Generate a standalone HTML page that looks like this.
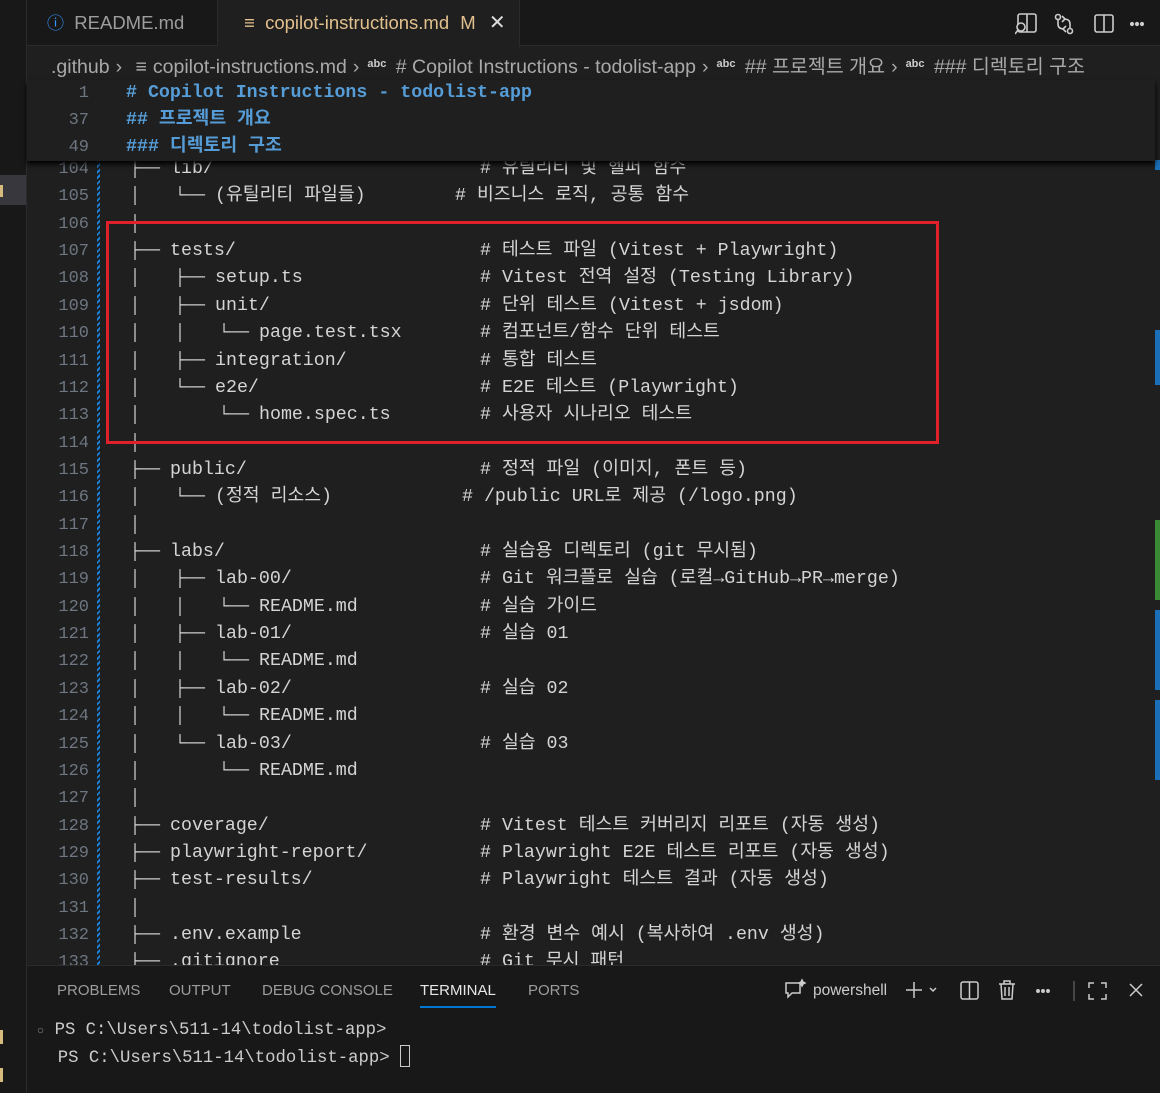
<!DOCTYPE html>
<html><head><meta charset="utf-8"><style>
*{margin:0;padding:0;box-sizing:border-box}
body{width:1160px;height:1093px;background:#1f1f1f;position:relative;overflow:hidden;font-family:"Liberation Sans","Noto Sans CJK KR",sans-serif;color:#ccc}
.abs{position:absolute}
.mono{font-family:"Liberation Mono","Noto Sans CJK KR",monospace;font-size:18.3px;white-space:pre}
#side{left:0;top:0;width:27px;height:1093px;background:#181818;border-right:1px solid #2b2b2b}
#tabs{left:27px;top:0;width:1133px;height:46px;background:#181818;border-bottom:1px solid #2b2b2b}
.tab{position:absolute;top:0;height:46px;font-size:18.5px;line-height:46px;padding-left:20px;white-space:nowrap}
#bc{left:27px;top:46px;width:1133px;height:36px;font-size:19.5px;line-height:36px;color:#a9a9a9;white-space:nowrap}
.abc{font-size:11px;font-weight:bold;vertical-align:6px;color:#ccc;margin-right:4px}
.sep{margin:0 8px 0 6px}
#editor{left:27px;top:160px;width:1133px;height:805px;overflow:hidden}
.row{position:absolute;left:0;height:27.36px;line-height:27.36px;width:1100px;color:#d4d4d4}
.row span{position:absolute}
.num{left:0;width:62px;text-align:right;color:#6e7681;font-size:17px}
.g{font-size:16.7px}
#sticky{left:27px;top:80px;width:1128px;height:81px;background:#1f1f1f;box-shadow:0 3px 5px #000;z-index:3}
.h{color:#569cd6;font-weight:bold;left:99px}
#panel{left:27px;top:965px;width:1133px;height:128px;background:#181818;border-top:1px solid #2b2b2b}
.pt{position:absolute;top:16px;font-size:15px;color:#9d9d9d}
</style></head><body>
<div id="side" class="abs">
 <div class="abs" style="left:0;top:175px;width:26px;height:30px;background:#37373d"></div>
 <div class="abs" style="left:0;top:185px;width:3px;height:12px;background:#d7ba7d"></div>
 <div class="abs" style="left:0;top:1030px;width:3px;height:14px;background:#d7ba7d"></div>
 <div class="abs" style="left:0;top:1068px;width:3px;height:14px;background:#d7ba7d"></div>
</div>
<div id="tabs" class="abs">
 <div class="tab" style="left:0;width:191px;color:#9d9d9d;border-right:1px solid #2b2b2b"><span style="color:#3794ff;font-size:17px">ⓘ</span>&nbsp; README.md</div>
 <div class="tab" style="left:191px;width:302px;background:#1f1f1f;color:#e2c08d;border-right:1px solid #2b2b2b;height:47px;padding-left:26px">≡&nbsp; copilot-instructions.md <span style="margin-left:6px">M</span> <span style="color:#ddd;margin-left:8px;font-size:20px">✕</span></div>
 <svg class="abs" style="left:988px;top:12px" width="130" height="24" fill="none" stroke="#ccc" stroke-width="1.6">
  <rect x="3" y="2" width="18" height="18" rx="2"/><line x1="12" y1="2" x2="12" y2="20"/><circle cx="6" cy="15" r="4" fill="#181818"/><line x1="3" y1="18" x2="0" y2="22"/>
  <circle cx="43" cy="5" r="2.5"/><circle cx="55" cy="19" r="2.5"/><path d="M43 8v4q0 5 6 5M55 16v-4q0-5-6-5M47 4l3 3-3 3M51 14l-3 3 3 3"/>
  <rect x="80" y="3" width="18" height="17" rx="2"/><line x1="89" y1="3" x2="89" y2="20"/>
  <circle cx="117" cy="12" r="1.3" fill="#ccc"/><circle cx="122" cy="12" r="1.3" fill="#ccc"/><circle cx="127" cy="12" r="1.3" fill="#ccc"/>
 </svg>
</div>
<div id="bc" class="abs"><span style="margin-left:24px">.github</span><span class="sep">›</span> <span style="margin-right:6px">≡</span>copilot-instructions.md<span class="sep">›</span><span class="abc">abc</span> # Copilot Instructions - todolist-app<span class="sep">›</span><span class="abc">abc</span> ## 프로젝트 개요<span class="sep">›</span><span class="abc">abc</span> ### 디렉토리 구조</div>
<div id="sticky" class="abs mono">
 <div class="row" style="top:0"><span class="num">1</span><span class="h"># Copilot Instructions - todolist-app</span></div>
 <div class="row" style="top:27px"><span class="num">37</span><span class="h">## 프로젝트 개요</span></div>
 <div class="row" style="top:54px"><span class="num">49</span><span class="h">### 디렉토리 구조</span></div>
</div>
<div id="editor" class="abs mono">
 <div class="abs" style="left:70px;top:0;width:3px;height:805px;background:repeating-linear-gradient(135deg,#1b81d8 0 2px,#1f1f1f 2px 4px)"></div>
 <div class="abs" style="right:0;top:0;width:5px;height:10px;background:#1b6fb8"></div>
 <div class="abs" style="right:0;top:170px;width:5px;height:55px;background:#1b6fb8"></div>
 <div class="abs" style="right:0;top:360px;width:5px;height:80px;background:#388a34"></div>
 <div class="abs" style="right:0;top:450px;width:5px;height:80px;background:#1b6fb8"></div>
 <div class="abs" style="right:0;top:540px;width:5px;height:80px;background:#1b6fb8"></div>
 <div id="lines" style="position:absolute;left:0;top:-4px;width:1100px;height:900px">
  <div class="row" style="top:0"><span class="num">104</span><span class="g" style="left:103px">├──</span><span style="left:143px">lib/</span><span style="left:453px"># 유틸리티 및 헬퍼 함수</span></div>
  <div class="row" style="top:27.36px"><span class="num">105</span><span class="g" style="left:103px">│</span><span class="g" style="left:148px">└──</span><span style="left:188px">(유틸리티 파일들)</span><span style="left:428px"># 비즈니스 로직, 공통 함수</span></div>
  <div class="row" style="top:54.72px"><span class="num">106</span><span class="g" style="left:103px">│</span></div>
  <div class="row" style="top:82.08px"><span class="num">107</span><span class="g" style="left:103px">├──</span><span style="left:143px">tests/</span><span style="left:453px"># 테스트 파일 (Vitest + Playwright)</span></div>
  <div class="row" style="top:109.44px"><span class="num">108</span><span class="g" style="left:103px">│</span><span class="g" style="left:148px">├──</span><span style="left:188px">setup.ts</span><span style="left:453px"># Vitest 전역 설정 (Testing Library)</span></div>
  <div class="row" style="top:136.8px"><span class="num">109</span><span class="g" style="left:103px">│</span><span class="g" style="left:148px">├──</span><span style="left:188px">unit/</span><span style="left:453px"># 단위 테스트 (Vitest + jsdom)</span></div>
  <div class="row" style="top:164.16px"><span class="num">110</span><span class="g" style="left:103px">│</span><span class="g" style="left:148px">│</span><span class="g" style="left:192px">└──</span><span style="left:232px">page.test.tsx</span><span style="left:453px"># 컴포넌트/함수 단위 테스트</span></div>
  <div class="row" style="top:191.52px"><span class="num">111</span><span class="g" style="left:103px">│</span><span class="g" style="left:148px">├──</span><span style="left:188px">integration/</span><span style="left:453px"># 통합 테스트</span></div>
  <div class="row" style="top:218.88px"><span class="num">112</span><span class="g" style="left:103px">│</span><span class="g" style="left:148px">└──</span><span style="left:188px">e2e/</span><span style="left:453px"># E2E 테스트 (Playwright)</span></div>
  <div class="row" style="top:246.24px"><span class="num">113</span><span class="g" style="left:103px">│</span><span class="g" style="left:192px">└──</span><span style="left:232px">home.spec.ts</span><span style="left:453px"># 사용자 시나리오 테스트</span></div>
  <div class="row" style="top:273.6px"><span class="num">114</span><span class="g" style="left:103px">│</span></div>
  <div class="row" style="top:300.96px"><span class="num">115</span><span class="g" style="left:103px">├──</span><span style="left:143px">public/</span><span style="left:453px"># 정적 파일 (이미지, 폰트 등)</span></div>
  <div class="row" style="top:328.32px"><span class="num">116</span><span class="g" style="left:103px">│</span><span class="g" style="left:148px">└──</span><span style="left:188px">(정적 리소스)</span><span style="left:435px"># /public URL로 제공 (/logo.png)</span></div>
  <div class="row" style="top:355.68px"><span class="num">117</span><span class="g" style="left:103px">│</span></div>
  <div class="row" style="top:383.04px"><span class="num">118</span><span class="g" style="left:103px">├──</span><span style="left:143px">labs/</span><span style="left:453px"># 실습용 디렉토리 (git 무시됨)</span></div>
  <div class="row" style="top:410.4px"><span class="num">119</span><span class="g" style="left:103px">│</span><span class="g" style="left:148px">├──</span><span style="left:188px">lab-00/</span><span style="left:453px"># Git 워크플로 실습 (로컬→GitHub→PR→merge)</span></div>
  <div class="row" style="top:437.76px"><span class="num">120</span><span class="g" style="left:103px">│</span><span class="g" style="left:148px">│</span><span class="g" style="left:192px">└──</span><span style="left:232px">README.md</span><span style="left:453px"># 실습 가이드</span></div>
  <div class="row" style="top:465.12px"><span class="num">121</span><span class="g" style="left:103px">│</span><span class="g" style="left:148px">├──</span><span style="left:188px">lab-01/</span><span style="left:453px"># 실습 01</span></div>
  <div class="row" style="top:492.48px"><span class="num">122</span><span class="g" style="left:103px">│</span><span class="g" style="left:148px">│</span><span class="g" style="left:192px">└──</span><span style="left:232px">README.md</span></div>
  <div class="row" style="top:519.84px"><span class="num">123</span><span class="g" style="left:103px">│</span><span class="g" style="left:148px">├──</span><span style="left:188px">lab-02/</span><span style="left:453px"># 실습 02</span></div>
  <div class="row" style="top:547.2px"><span class="num">124</span><span class="g" style="left:103px">│</span><span class="g" style="left:148px">│</span><span class="g" style="left:192px">└──</span><span style="left:232px">README.md</span></div>
  <div class="row" style="top:574.56px"><span class="num">125</span><span class="g" style="left:103px">│</span><span class="g" style="left:148px">└──</span><span style="left:188px">lab-03/</span><span style="left:453px"># 실습 03</span></div>
  <div class="row" style="top:601.92px"><span class="num">126</span><span class="g" style="left:103px">│</span><span class="g" style="left:192px">└──</span><span style="left:232px">README.md</span></div>
  <div class="row" style="top:629.28px"><span class="num">127</span><span class="g" style="left:103px">│</span></div>
  <div class="row" style="top:656.64px"><span class="num">128</span><span class="g" style="left:103px">├──</span><span style="left:143px">coverage/</span><span style="left:453px"># Vitest 테스트 커버리지 리포트 (자동 생성)</span></div>
  <div class="row" style="top:684px"><span class="num">129</span><span class="g" style="left:103px">├──</span><span style="left:143px">playwright-report/</span><span style="left:453px"># Playwright E2E 테스트 리포트 (자동 생성)</span></div>
  <div class="row" style="top:711.36px"><span class="num">130</span><span class="g" style="left:103px">├──</span><span style="left:143px">test-results/</span><span style="left:453px"># Playwright 테스트 결과 (자동 생성)</span></div>
  <div class="row" style="top:738.72px"><span class="num">131</span><span class="g" style="left:103px">│</span></div>
  <div class="row" style="top:766.08px"><span class="num">132</span><span class="g" style="left:103px">├──</span><span style="left:143px">.env.example</span><span style="left:453px"># 환경 변수 예시 (복사하여 .env 생성)</span></div>
  <div class="row" style="top:793.44px"><span class="num">133</span><span class="g" style="left:103px">├──</span><span style="left:143px">.gitignore</span><span style="left:453px"># Git 무시 패턴</span></div>
 </div>
 <div class="abs" style="left:79px;top:61px;width:833px;height:223px;border:3px solid #e0202a"></div>
</div>
<div id="panel" class="abs">
 <span class="pt" style="left:30px">PROBLEMS</span>
 <span class="pt" style="left:142px">OUTPUT</span>
 <span class="pt" style="left:235px">DEBUG CONSOLE</span>
 <span class="pt" style="left:393px;color:#e7e7e7">TERMINAL</span>
 <div class="abs" style="left:393px;top:40px;width:76px;height:2px;background:#0078d4"></div>
 <span class="pt" style="left:501px">PORTS</span>
 <svg class="abs" style="left:756px;top:12px" width="370" height="26" fill="none" stroke="#ccc" stroke-width="1.5">
  <path d="M3 5h14v10h-8l-4 4v-4H3z"/><path d="M19 2l1 2 2 1-2 1-1 2-1-2-2-1 2-1z" fill="#ccc"/>
  <path d="M131 4v16M123 12h16M147 10l3 3 3-3"/>
  <rect x="178" y="4" width="17" height="17" rx="2"/><line x1="186.5" y1="4" x2="186.5" y2="21"/>
  <path d="M216 6h16M221 6V3h6v3M218 6l1 15h10l1-15M222 9v9M226 9v9"/>
  <circle cx="255" cy="13" r="1.2" fill="#ccc"/><circle cx="260" cy="13" r="1.2" fill="#ccc"/><circle cx="265" cy="13" r="1.2" fill="#ccc"/>
  <line x1="291" y1="3" x2="291" y2="23" stroke="#555"/>
  <path d="M311 5h-5v5M318 5h5v5M311 21h-5v-5M318 21h5v-5"/>
  <path d="M347 6l12 12M359 6l-12 12"/>
 </svg>
 <span class="abs" style="left:786px;top:16px;font-size:15.5px;color:#ccc">powershell</span>
 <div class="abs" style="left:10px;top:52px;line-height:25.5px;color:#ccc;font-family:'Liberation Mono',monospace;font-size:17.3px;white-space:pre"><span style="color:#888;font-size:12px">○</span> PS C:\Users\511-14\todolist-app&gt;<br>  PS C:\Users\511-14\todolist-app&gt; <span style="display:inline-block;width:10px;height:22px;border:1.5px solid #ccc;vertical-align:-5px"></span></div>
</div>
</body></html>
